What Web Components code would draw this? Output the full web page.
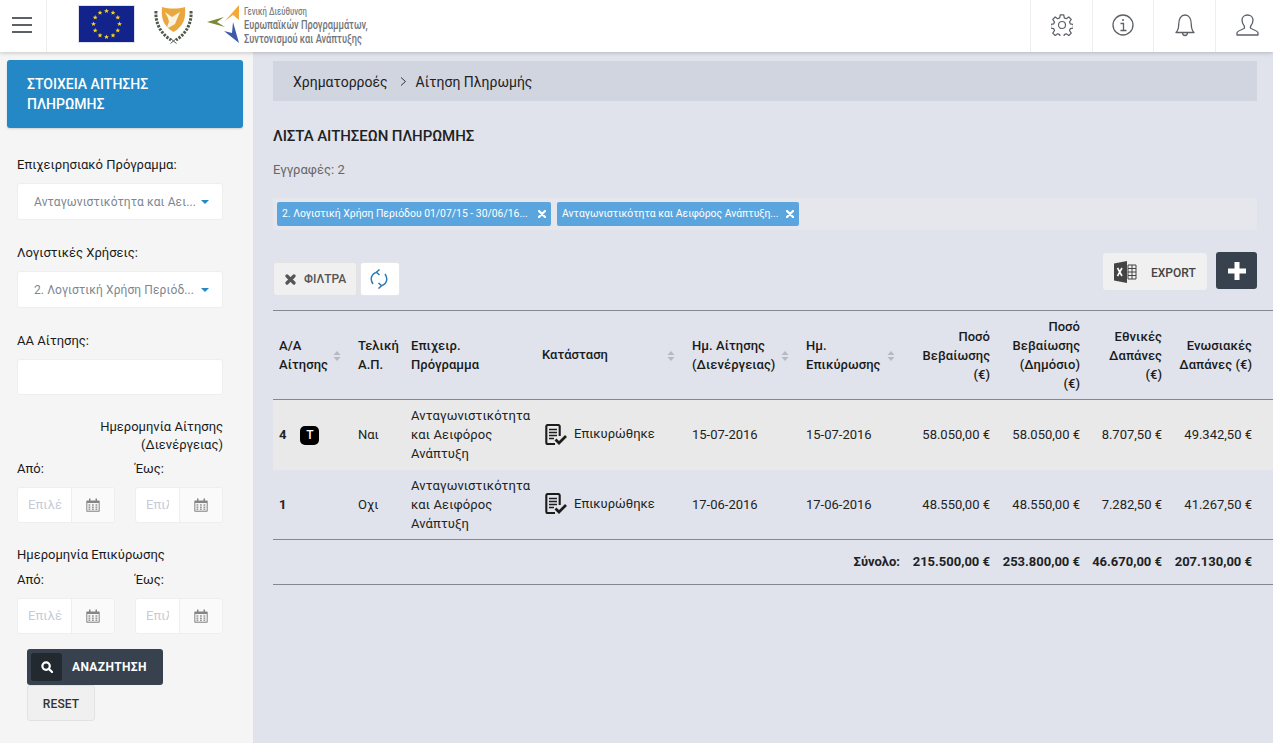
<!DOCTYPE html>
<html lang="el"><head><meta charset="utf-8"><title>Λίστα Αιτήσεων Πληρωμής</title>
<style>
html,body{margin:0;height:100%;overflow:hidden}
body{font:13px/20px Roboto,"Liberation Sans",sans-serif;color:#1a1a1a;background:#e0e3ec}
#app{display:flex;flex-direction:column;height:743px}
#body{display:flex;flex:1;min-height:0}
</style></head><body>
<div id="app">
<app-header></app-header>
<div id="body"><filter-panel></filter-panel><list-page></list-page></div>
</div>
<template id="t-header"><style>
:host{display:flex;height:52px;background:#fff;box-shadow:0 1px 4px rgba(0,0,0,.2);position:relative;z-index:2;align-items:stretch}
.burger{border-right:1px solid #eee;display:flex;align-items:flex-start;padding-top:17px;box-sizing:content-box;height:35px;padding-left:12px;width:34px}
.logos{flex:1;display:flex;align-items:flex-start;padding:5px 0 0 31px;min-width:0}
.dg{display:flex;flex-direction:column;margin-left:3px;font:500 12.500px/13.500px Roboto,sans-serif;color:#70757b;white-space:nowrap;transform:scaleX(.74);transform-origin:0 0;width:170px;flex:none}
.dg small{font:500 10.500px/13px Roboto,sans-serif;color:#7d8288}
.ic{box-sizing:border-box;border-left:1px solid #eee;display:flex;align-items:center;justify-content:center;height:52px;padding-bottom:2px;flex:none}
svg{display:block;flex:none}
</style>
<div class="burger"><svg width="20" height="16" viewBox="0 0 20 16" fill="#5c6167"><rect y="0" width="20" height="2"/><rect y="7" width="20" height="2"/><rect y="14" width="20" height="2"/></svg></div>
<div class="logos">
<svg width="57" height="38" viewBox="0 0 57 38"><defs><polygon id="st" points="0,-2.400 .7,-.7 2.400,-.7 1.100,.4 1.500,2.100 0,1.100 -1.500,2.100 -1.100,.4 -2.400,-.7 -.7,-.7" fill="#f7d417"/></defs><rect x=".5" y=".5" width="56" height="37" fill="#13238c" stroke="#dfe2ee"/>
<g transform="translate(28.500 19)"><use href="#st" x="0" y="-13"/><use href="#st" x="6.500" y="-11.300"/><use href="#st" x="11.300" y="-6.500"/><use href="#st" x="13" y="0"/><use href="#st" x="11.300" y="6.500"/><use href="#st" x="6.500" y="11.300"/><use href="#st" x="0" y="13"/><use href="#st" x="-6.500" y="11.300"/><use href="#st" x="-11.300" y="6.500"/><use href="#st" x="-13" y="0"/><use href="#st" x="-11.300" y="-6.500"/><use href="#st" x="-6.500" y="-11.300"/></g></svg>
<svg width="40" height="38" viewBox="0 0 40 38" style="margin:1px 13px 0 19px"><path d="M8 1c7 2 16 2 23 0 1 11-1 19-11.500 25C9 20 7 12 8 1z" fill="#e9a73f"/><path d="M11 6l7 5 8-5-3 7-2 5-5 3-3 1 1-4 1-2-1-4z" fill="#fbf3e2"/><path d="M2 5c-1 12 5 23 15 29M37 5c1 12-5 23-15 29" fill="none" stroke="#4f5a48" stroke-width="3" stroke-dasharray="2.400 1.200"/><path d="M16.500 37.500l6-5M22.500 37.500l-6-5" stroke="#555" stroke-width="1" fill="none"/></svg>
<svg width="34" height="40" viewBox="0 0 34 40" style="margin-top:-1px"><path d="M0 18l17-5-7 5 8 5z" fill="#7c8a37"/><path d="M32 1L18 17l8-6 6 5z" fill="#f2a938"/><path d="M17 27l8 2 1-11 6 21z" fill="#3f5ba8"/></svg>
<div class="dg"><small>Γενική Διεύθυνση</small><span>Ευρωπαϊκών Προγραμμάτων,</span><span>Συντονισμού και Ανάπτυξης</span></div>
</div>
<div class="ic" style="width:62px"><svg width="22" height="22" viewBox="0 0 24 24" fill="none" stroke="#5c6167" stroke-width="1.300" stroke-linejoin="round"><circle cx="12" cy="12" r="3.800"/><path d="M10.200 1.500h3.600l.6 3.100 2 .9 2.700-1.800 2.500 2.500-1.800 2.700.9 2 3.100.6v3.600l-3.100.6-.9 2 1.800 2.700-2.500 2.500-2.700-1.800-2 .9-.6 3.100h-3.600l-.6-3.100-2-.9-2.700 1.800-2.500-2.500 1.800-2.700-.9-2-3.100-.6v-3.600l3.100-.6.9-2-1.800-2.700 2.500-2.500 2.700 1.800 2-.9z" transform="translate(-.6 -.6) scale(1.050)"/></svg></div>
<div class="ic" style="width:61px"><svg width="22" height="22" viewBox="0 0 22 22" fill="none" stroke="#5c6167" stroke-width="1.300"><circle cx="11" cy="11" r="10"/><circle cx="11" cy="6" r="1" fill="#5c6167" stroke="none"/><path d="M8.500 9.500H11.500V16M8.500 16.500h6"/></svg></div>
<div class="ic" style="width:62px"><svg width="20" height="23" viewBox="0 0 20 23" fill="none" stroke="#5c6167" stroke-width="1.300" stroke-linejoin="round"><path d="M1 18.500c2-2 2.700-3.500 2.700-8C3.700 5 6 1 10 1s6.300 4 6.300 9.500c0 4.500.7 6 2.700 8z"/><path d="M7.500 18.500c0 4 5 4 5 0"/></svg></div>
<div class="ic" style="width:58px;padding-left:5px"><svg width="23" height="22" viewBox="0 0 23 22" fill="none" stroke="#5c6167" stroke-width="1.300" stroke-linejoin="round"><path d="M1 21v-2c0-2 5-3.500 7-4.500.8-.5.5-2 0-2.800C6.500 9.500 6 7.500 6 6c0-3 2.500-5 5.500-5S17 3 17 6c0 1.500-.5 3.500-2 5.700-.5.8-.8 2.300 0 2.800 2 1 7 2.500 7 4.500v2z"/></svg></div>
</template>

<template id="t-panel"><style>
:host{display:block;width:253px;flex:none;background:#f5f5f5;box-sizing:border-box;padding:8px 0 0 0}
.head{margin:0 10px 0 7px;height:68px;box-sizing:border-box;background:#2488c6;border-radius:3px;color:#fff;font-weight:500;font-size:14px;line-height:20px;padding:14px 20px;box-shadow:0 1px 2px rgba(0,0,0,.15)}
.form{padding:27px 30px 0 17px;display:flex;flex-direction:column}
.lbl{height:20px;margin-bottom:8px}
.box{height:37px;box-sizing:border-box;background:#fff;border:1px solid #eee;border-radius:3px;margin-bottom:23px;display:flex;align-items:center;padding:0 13px 0 16px;color:#7d8791;font-size:12px;letter-spacing:.1px;justify-content:space-between}
.box i{width:0;height:0;border:4px solid transparent;border-top:4px solid #2488c6;border-bottom:0}
.box span{white-space:nowrap}
.rt{text-align:right;line-height:18px;margin:1px 0 5px}
.pair{display:flex;justify-content:space-between}
.btns{display:flex;flex-direction:column;align-items:flex-start;padding:15px 0 0 10px}
</style>
<div class="head">ΣΤΟΙΧΕΙΑ ΑΙΤΗΣΗΣ ΠΛΗΡΩΜΗΣ</div>
<div class="form">
<div class="lbl">Επιχειρησιακό Πρόγραμμα:</div>
<div class="box"><span>Ανταγωνιστικότητα και Αει...</span><i></i></div>
<div class="lbl">Λογιστικές Χρήσεις:</div>
<div class="box"><span>2. Λογιστική Χρήση Περιόδ...</span><i></i></div>
<div class="lbl">ΑΑ Αίτησης:</div>
<div class="box" style="height:36px;margin-bottom:22px"></div>
<div class="rt">Ημερομηνία Αίτησης<br>(Διενέργειας)</div>
<div class="pair" style="height:20px;margin-bottom:8px"><span style="width:118px">Από:</span><span style="width:88px">Έως:</span></div>
<div class="pair" style="margin-bottom:22px"><date-field w="98" tw="36">Επιλέ</date-field><date-field w="88" tw="23">Επιλ</date-field></div>
<div class="lbl" style="margin-bottom:5px">Ημερομηνία Επικύρωσης</div>
<div class="pair" style="height:20px;margin-bottom:8px"><span style="width:118px">Από:</span><span style="width:88px">Έως:</span></div>
<div class="pair"><date-field w="98" tw="36">Επιλέ</date-field><date-field w="88" tw="23">Επιλ</date-field></div>
<div class="btns"><search-btn></search-btn><reset-btn></reset-btn></div>
</div>
</template>

<template id="t-date"><style>
:host{display:flex;height:36px;box-sizing:border-box;border:1px solid #eee;border-radius:3px;background:#fff;overflow:hidden}
.t{box-sizing:border-box;padding-left:10px;color:#c5ccd8;font-size:13px;line-height:34px;overflow:hidden;white-space:nowrap;letter-spacing:.1px}
.t div{overflow:hidden}
.a{width:43px;flex:none;border-left:1px solid #eee;background:#fafafa;display:flex;align-items:center;justify-content:center;box-sizing:border-box}
</style>
<div class="t"><div><slot></slot></div></div>
<div class="a"><svg width="14" height="14" viewBox="0 0 14 14"><path d="M1 2.500h12a.7.7 0 0 1 .7.700V13a.7.7 0 0 1-.7.700H1a.7.7 0 0 1-.7-.700V3.200A.7.7 0 0 1 1 2.500z" fill="#858585"/><rect x="1.300" y="5" width="11.400" height="7.700" fill="#f5f5f5"/><path d="M3 .5h1.500v3H3zM9.500.5H11v3H9.500z" fill="#858585"/><path d="M2.500 6.300h1.800v1.500H2.500zM6 6.300h1.800v1.500H6zM9.500 6.300h1.800v1.500H9.500zM2.500 8.500h1.800V10H2.500zM6 8.500h1.800V10H6zM9.500 8.500h1.800V10H9.500zM2.500 10.500h1.800V12H2.500zM6 10.500h1.800V12H6zM9.500 10.500h1.800V12H9.500z" fill="#999"/></svg></div>
</template>

<template id="t-search"><style>
:host{display:flex;width:136px;height:36px;box-sizing:border-box;background:#37424e;border-radius:3px;color:#fff;font-weight:700;font-size:12px;letter-spacing:.35px;align-items:center;padding:4px}
.i{width:31px;height:28px;background:#22292f;border-radius:3px;display:flex;align-items:center;justify-content:center;margin-right:10px}
</style><div class="i"><svg width="12" height="12" viewBox="0 0 13 13" fill="none" stroke="#fff" stroke-width="2.400"><circle cx="5.500" cy="5.500" r="4"/><path d="M8.500 8.500l3.500 3.500" stroke-linecap="round"/></svg></div><span>ΑΝΑΖΗΤΗΣΗ</span></template>

<template id="t-reset"><style>
:host{display:flex;width:68px;height:36px;box-sizing:border-box;background:#f0f0f0;border:1px solid #e2e2e2;border-radius:3px;color:#333;font-weight:500;font-size:12px;align-items:center;justify-content:center;padding-top:1px;letter-spacing:.1px}
</style>RESET</template>

<template id="t-list"><style>
:host{display:block;flex:1;min-width:0;padding:9px 16px 0 20px;position:relative}
.crumb{height:40px;box-sizing:border-box;background:#d1d5df;display:flex;align-items:center;padding:2px 0 0 20px;font-size:14px;color:#222;gap:12px}
.crumb svg{margin-top:-1px}
.crumb span+svg+span{margin-left:-3px}
h1{margin:25px 0 0;font-size:15px;font-weight:500;line-height:20px;color:#222;letter-spacing:-.08px}
.count{margin-top:14px;font-size:13px;color:#666;line-height:20px}
.chips{margin-top:18px;height:32px;background:#e5e7ed;display:flex;align-items:center;padding-left:4px;gap:6px}
.tools{display:flex;justify-content:space-between;height:58px;margin-top:22px;align-items:flex-start}
.left{display:flex;gap:3px;margin-top:10px}
.right{display:flex;align-items:flex-start;gap:9px}
.fb{width:84px;height:34px;box-sizing:border-box;background:#f0f0f0;border:1px solid #e2e2e2;border-radius:3px;display:flex;align-items:center;color:#555;font-weight:500;font-size:12px;padding-left:11px;gap:7px}
.rb{width:40px;height:34px;background:#fff;border:1px solid #e6e6e6;box-sizing:border-box;border-radius:3px;display:flex;align-items:center;justify-content:center;padding-right:3px}
.ex{width:104px;height:37px;margin-top:1px;box-sizing:border-box;background:#f0f0f0;border-radius:3px;display:flex;align-items:center;padding-left:11px;font-size:12px;font-weight:500;color:#444;gap:14px}
.ex span{padding-top:2px}
.add{width:41px;height:37px;background:#37424e;border-radius:3px;display:flex;align-items:center;justify-content:center}
</style>
<div class="crumb"><span>Χρηματορροές</span><svg width="7" height="9" viewBox="0 0 7 9" fill="none" stroke="#333" stroke-width="1"><path d="M1 .5l4.500 4-4.500 4"/></svg><span>Αίτηση Πληρωμής</span></div>
<h1>ΛΙΣΤΑ ΑΙΤΗΣΕΩΝ ΠΛΗΡΩΜΗΣ</h1>
<div class="count">Εγγραφές: 2</div>
<div class="chips"><filter-chip w="274">2. Λογιστική Χρήση Περιόδου 01/07/15 - 30/06/16...</filter-chip><filter-chip w="242">Ανταγωνιστικότητα και Αειφόρος Ανάπτυξη...</filter-chip></div>
<div class="tools">
<div class="left"><div class="fb"><svg width="11" height="11" viewBox="0 0 11 11" stroke="#555" stroke-width="3.200" stroke-linecap="round"><path d="M2 2l7 7M9 2l-7 7"/></svg><span style="margin-left:1px">ΦΙΛΤΡΑ</span></div>
<div class="rb"><svg width="18" height="20" viewBox="0 0 18 20" fill="none" stroke="#2e7cb5" stroke-width="1.500"><path d="M3 15C-.5 10 1.500 4.500 7 3.200M15 5c3.500 5 1.500 10.500-4 11.800"/><path d="M9.500 .5L6.500 3.200 9.500 6M8.500 19.500l3-2.700-3-2.800" /></svg></div></div>
<div class="right"><div class="ex"><svg width="23" height="22" viewBox="0 0 23 22"><path d="M0 2.500L13 0v22L0 19.500z" fill="#444"/><path d="M3.500 7l4.500 8M8 7l-4.500 8" stroke="#fff" stroke-width="1.600"/><path d="M14 4h8v14h-8z" fill="none" stroke="#444"/><path d="M14 7.500h8M14 11h8M14 14.500h8M18 4v14" stroke="#444"/></svg><span>EXPORT</span></div>
<div class="add"><svg width="18" height="18" viewBox="0 0 18 18" fill="#fff"><path d="M6.500 0h5v6.500H18v5h-6.500V18h-5v-6.500H0v-5h6.500z"/></svg></div></div>
</div>
<pay-table></pay-table>
</template>

<template id="t-chip"><style>
:host{display:flex;height:24px;box-sizing:border-box;background:#5aa5de;border-radius:2px;color:#fff;font-size:10.400px;align-items:center;padding:0 5px;justify-content:space-between;white-space:nowrap}
svg{flex:none}
</style><span><slot></slot></span><svg width="8" height="8" viewBox="0 0 8 8" stroke="#fff" stroke-width="2.200" stroke-linecap="round"><path d="M1 1l6 6M7 1L1 7"/></svg></template>

<template id="t-sort"><style>
:host{display:block;width:8px;height:10px}svg{display:block}
</style><svg width="8" height="10" viewBox="0 0 8 10" fill="#b5b9c2"><path d="M4 0l3.500 4H.5zM4 10l3.500-4H.5z"/></svg></template>

<template id="t-status"><style>
:host{display:inline-flex;align-items:center;gap:6px;margin-left:3px;vertical-align:middle}
svg{display:block}span{position:relative;top:-1px}
</style><svg width="23" height="22" viewBox="0 0 23 22" fill="none" stroke="#1c1c1c" stroke-width="2.100"><path d="M10 20H2.800A1.500 1.500 0 0 1 1.300 18.500V2.500A1.500 1.500 0 0 1 2.800 1h10.400a1.500 1.500 0 0 1 1.500 1.500V12"/><path d="M4 5.500h8M4 8.500h8M4 11.500h8M4 14.500h5" stroke-width="1.700"/><path d="M10.500 15.500l3.500 3.500 7-7" stroke-width="2.700"/></svg><span>Επικυρώθηκε</span></template>

<template id="t-table"><style>
:host{display:block;margin-right:-16px}
table{border-collapse:collapse;table-layout:fixed;width:1000px;font-size:13px;line-height:19px;color:#222}
th,td{padding:0 6px;vertical-align:middle;text-align:left}
thead tr{height:89px;border-top:1px solid #85888f;border-bottom:1px solid #85888f}
th{font-weight:500;position:relative;color:#1a1a1a;letter-spacing:.05px}
th.r,td.r{text-align:right}
th user-sort{position:absolute;top:50%;margin-top:-4px;right:11px}
tbody tr{height:70px}
tbody tr.a{background:#e9e9e9}
.id{font-weight:700}
.prog{letter-spacing:.12px}
.one{display:inline-block;padding-bottom:2px}
.t{display:inline-block;width:19px;height:19px;background:#000;color:#fff;font-weight:500;font-size:12px;line-height:19px;text-align:center;border-radius:5px;margin-left:14px;vertical-align:middle}
tfoot tr{height:45px;border-top:1px solid #85888f;border-bottom:1px solid #85888f}
tfoot td{font-weight:700;white-space:nowrap;padding-bottom:2px}
tfoot td.r{padding-left:0}
td.last,th.last{padding-right:21px}
</style>
<table><colgroup><col style="width:79px"><col style="width:53px"><col style="width:131px"><col style="width:150px"><col style="width:114px"><col style="width:106px"><col style="width:90px"><col style="width:90px"><col style="width:82px"><col style="width:105px"></colgroup>
<thead><tr><th>Α/Α<br>Αίτησης<user-sort></user-sort></th><th>Τελική<br>Α.Π.</th><th>Επιχειρ.<br>Πρόγραμμα</th><th><span class="one">Κατάσταση</span><user-sort></user-sort></th><th>Ημ. Αίτησης<br>(Διενέργειας)<user-sort></user-sort></th><th>Ημ.<br>Επικύρωσης<user-sort></user-sort></th><th class="r">Ποσό<br>Βεβαίωσης<br>(€)</th><th class="r">Ποσό<br>Βεβαίωσης<br>(Δημόσιο)<br>(€)</th><th class="r">Εθνικές<br>Δαπάνες<br>(€)</th><th class="r last">Ενωσιακές<br>Δαπάνες (€)</th></tr></thead>
<tbody>
<tr class="a"><td class="id">4<span class="t">T</span></td><td>Ναι</td><td class="prog">Ανταγωνιστικότητα και Αειφόρος Ανάπτυξη</td><td><status-cell></status-cell></td><td>15-07-2016</td><td>15-07-2016</td><td class="r">58.050,00 €</td><td class="r">58.050,00 €</td><td class="r">8.707,50 €</td><td class="r last">49.342,50 €</td></tr>
<tr><td class="id">1</td><td>Οχι</td><td class="prog">Ανταγωνιστικότητα και Αειφόρος Ανάπτυξη</td><td><status-cell></status-cell></td><td>17-06-2016</td><td>17-06-2016</td><td class="r">48.550,00 €</td><td class="r">48.550,00 €</td><td class="r">7.282,50 €</td><td class="r last">41.267,50 €</td></tr>
</tbody>
<tfoot><tr><td colspan="6" class="r">Σύνολο:</td><td class="r">215.500,00 €</td><td class="r">253.800,00 €</td><td class="r">46.670,00 €</td><td class="r last">207.130,00 €</td></tr></tfoot>
</table></template>

<script>
function el(tag,tid,after){customElements.define(tag,class extends HTMLElement{constructor(){super();this.attachShadow({mode:'open'}).appendChild(document.getElementById(tid).content.cloneNode(true));}connectedCallback(){if(after)after(this)}})}
el('app-header','t-header');el('filter-panel','t-panel');
el('date-field','t-date',h=>{const w=+h.getAttribute('w');h.style.width=w+'px';h.shadowRoot.querySelector('.t').style.width=(w-45)+'px';h.shadowRoot.querySelector('.t div').style.width=h.getAttribute('tw')+'px'});
el('search-btn','t-search');el('reset-btn','t-reset');el('list-page','t-list');
el('filter-chip','t-chip',h=>{h.style.width=h.getAttribute('w')+'px'});
el('user-sort','t-sort');el('status-cell','t-status');el('pay-table','t-table');
</script>
</body></html>
